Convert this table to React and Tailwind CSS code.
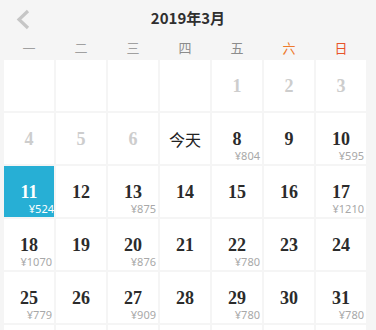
import React from 'react'

const weekdays = [
    { label: '一', color: 'text-[#a0a0a0]' },
    { label: '二', color: 'text-[#a0a0a0]' },
    { label: '三', color: 'text-[#a0a0a0]' },
    { label: '四', color: 'text-[#8c8c8c]' },
    { label: '五', color: 'text-[#8c8c8c]' },
    { label: '六', color: 'text-[#ee7a2c]' },
    { label: '日', color: 'text-[#e8542a]' },
]

// day: number or label, state: 'empty' | 'past' | 'today' | 'normal' | 'active'
const days = [
    { state: 'empty' }, { state: 'empty' }, { state: 'empty' }, { state: 'empty' },
    { day: 1, state: 'past' }, { day: 2, state: 'past' }, { day: 3, state: 'past' },
    { day: 4, state: 'past' }, { day: 5, state: 'past' }, { day: 6, state: 'past' },
    { day: '今天', state: 'today' },
    { day: 8, price: 804 }, { day: 9 }, { day: 10, price: 595 },
    { day: 11, price: 524, state: 'active' }, { day: 12 }, { day: 13, price: 875 },
    { day: 14 }, { day: 15 }, { day: 16 }, { day: 17, price: 1210 },
    { day: 18, price: 1070 }, { day: 19 }, { day: 20, price: 876 },
    { day: 21 }, { day: 22, price: 780 }, { day: 23 }, { day: 24 },
    { day: 25, price: 779 }, { day: 26 }, { day: 27, price: 909 },
    { day: 28 }, { day: 29, price: 780 }, { day: 30 }, { day: 31, price: 780 },
    { state: 'empty' }, { state: 'empty' }, { state: 'empty' }, { state: 'empty' },
    { state: 'empty' }, { state: 'empty' }, { state: 'empty' },
]

const DayCell = ({ item }) =>
{
    const active = item.state === 'active'

    let numberClass = 'text-[18px] font-bold text-[#2b2b2b] font-["Liberation_Serif",serif]'
    if (item.state === 'past')
    {
        numberClass = 'text-[18px] font-bold text-[#cdcdcd] font-["Liberation_Serif",serif]'
    }
    else if (item.state === 'today')
    {
        numberClass = 'text-[16px] text-[#222] font-["Noto_Sans_CJK_SC",sans-serif]'
    }
    else if (active)
    {
        numberClass = 'text-[18px] font-bold text-white font-["Liberation_Serif",serif]'
    }

    return (
        <div className={`relative h-[51px] flex items-center justify-center ${active ? 'bg-[#27afd5]' : 'bg-white'}`}>
            {item.day !== undefined && (
                <span className={`leading-none mt-[1px] ${numberClass}`}>{item.day}</span>
            )}
            {item.price && (
                <span className={`absolute bottom-[3px] text-[11px] leading-none font-["Noto_Sans",sans-serif] ${active ? 'right-0 text-white' : 'right-[2px] text-[#a8a8a8]'}`}>
                    ¥{item.price}
                </span>
            )}
        </div>
    )
}

const App = () =>
{
    return (
        <div className="w-[376px] h-[330px] overflow-hidden bg-[#f5f5f5] font-['Noto_Sans_CJK_SC',sans-serif]">
            {/* Header */}
            <div className="relative h-[36px] flex items-center justify-center">
                <svg className="absolute left-[15px] top-[9px]" width="16" height="21" viewBox="0 0 16 21">
                    <path d="M13 2 L4 10.5 L13 19" fill="none" stroke="#c6c6c6" strokeWidth="3.2" />
                </svg>
                <span className="text-[15px] font-bold text-[#2f2f2f] mt-[1px]">2019年3月</span>
            </div>

            {/* Weekdays */}
            <div className="grid grid-cols-[repeat(7,50px)] gap-x-[2px] px-[4px] h-[22px] items-center">
                {weekdays.map((w) => (
                    <span key={w.label} className={`text-center text-[13px] leading-none ${w.color}`}>{w.label}</span>
                ))}
            </div>

            {/* Days */}
            <div className="grid grid-cols-[repeat(7,50px)] gap-[2px] px-[4px] pt-[2px]">
                {days.map((item, i) => (
                    <DayCell key={i} item={item} />
                ))}
            </div>
        </div>
    )
}

export default App
